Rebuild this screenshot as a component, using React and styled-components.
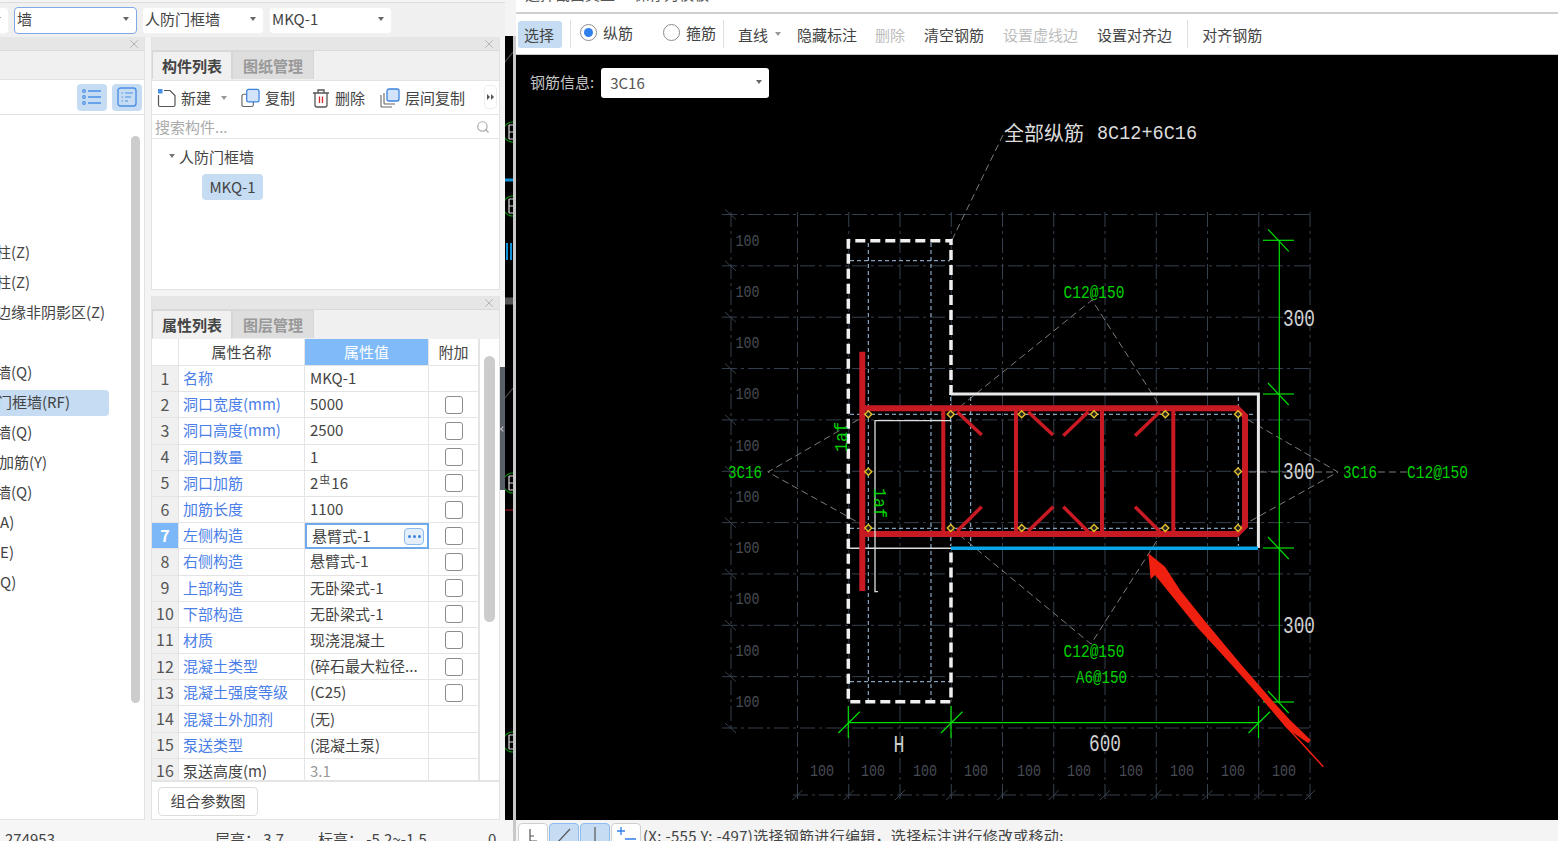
import React from "react";
import styled, { createGlobalStyle } from "styled-components";
import { Search, X } from "lucide-react";

const GlobalStyle = createGlobalStyle`
  html, body {
    margin: 0;
    padding: 0;
    background: #f0f0f0;
    overflow: hidden;
  }
  * {
    box-sizing: border-box;
  }
  body {
    font-family: "Noto Sans CJK SC", "Liberation Sans", sans-serif;
    font-size: 15px;
    color: #444;
  }
`;

const SIDE_ITEMS = [
  { text: "暗柱(Z)", shift: -19 },
  { text: "端柱(Z)", shift: -19 },
  { text: "约束边缘非阴影区(Z)", shift: -34 },
  { text: "", shift: 0 },
  { text: "剪力墙(Q)", shift: -34 },
  { text: "人防门框墙(RF)", shift: -33, active: true },
  { text: "砌体墙(Q)", shift: -34 },
  { text: "砌体加筋(Y)", shift: -31 },
  { text: "保温墙(Q)", shift: -34 },
  { text: "暗梁(A)", shift: -35 },
  { text: "墙垛(E)", shift: -35 },
  { text: "幕墙(Q)", shift: -35 },
];

const ROWS = [
  { name: "名称", value: "MKQ-1" },
  { name: "洞口宽度(mm)", value: "5000", check: true },
  { name: "洞口高度(mm)", value: "2500", check: true },
  { name: "洞口数量", value: "1", check: true },
  { name: "洞口加筋", value: "steel", check: true },
  { name: "加筋长度", value: "1100", check: true },
  { name: "左侧构造", value: "悬臂式-1", check: true, active: true },
  { name: "右侧构造", value: "悬臂式-1", check: true },
  { name: "上部构造", value: "无卧梁式-1", check: true },
  { name: "下部构造", value: "无卧梁式-1", check: true },
  { name: "材质", value: "现浇混凝土", check: true },
  { name: "混凝土类型", value: "(碎石最大粒径...", check: true },
  { name: "混凝土强度等级", value: "(C25)", check: true },
  { name: "混凝土外加剂", value: "(无)" },
  { name: "泵送类型", value: "(混凝土泵)" },
  { name: "泵送高度(m)", value: "3.1", plain: true },
];

const Page = styled.div`
  display: flex;
  width: 1558px;
  height: 841px;
  overflow: hidden;
`;

const LeftArea = styled.div`
  width: 505px;
  height: 841px;
  flex: none;
  display: flex;
  flex-direction: column;
  background: #f4f4f4;
`;

const TopBar = styled.div`
  height: 35px;
  flex: none;
  display: flex;
  align-items: center;
  gap: 5px;
  overflow: hidden;
  background: #f0f0f0;
  border-top: 1px solid #dcdcdc;
  margin-top: 2px;
`;

const Select = styled.div`
  width: ${(p) => p.$width}px;
  margin-left: ${(p) => p.$shift || 0}px;
  height: 27px;
  flex: none;
  display: flex;
  align-items: center;
  justify-content: space-between;
  padding: 0 7px 3px 2px;
  background: #fff;
  border-radius: 4px;
  border: 1px solid ${(p) => (p.$focus ? "#7fa8e6" : "#f2f2f2")};
  white-space: nowrap;
`;

const Caret = styled.i`
  display: block;
  flex: none;
  margin-left: ${(p) => p.$gap || 0}px;
  width: 0;
  height: 0;
  border-left: 3px solid transparent;
  border-right: 3px solid transparent;
  border-top: 4px solid ${(p) => p.$color || "#666"};
`;

const Panels = styled.div`
  display: flex;
  height: 783px;
  flex: none;
`;

const SidePanel = styled.div`
  width: 145px;
  flex: none;
  display: flex;
  flex-direction: column;
  background: #fff;
  border-right: 1px solid #e2e2e2;
  border-bottom: 1px solid #e2e2e2;
`;

const PanelHead = styled.div`
  height: 14px;
  flex: none;
  display: flex;
  align-items: center;
  justify-content: flex-end;
  padding-right: 3px;
  background: #e6e6e6;
  border-bottom: 1px solid #dadada;
  color: #aaa;
`;

const SideTabs = styled.div`
  height: 29px;
  flex: none;
  background: #f0f0f0;
  border-bottom: 1px solid #e2e2e2;
`;

const SideTools = styled.div`
  height: 35px;
  flex: none;
  display: flex;
  align-items: center;
  justify-content: flex-end;
  gap: 5px;
  padding-right: 2px;
  background: #fff;
  border-bottom: 1px solid #e2e2e2;
`;

const ViewButton = styled.div`
  width: 30px;
  height: 27px;
  display: flex;
  align-items: center;
  justify-content: center;
  background: #c5dcf2;
  border-radius: 4px;
`;

const SideBody = styled.div`
  flex: 1;
  display: flex;
  min-height: 0;
`;

const SideList = styled.div`
  width: 109px;
  flex: none;
  padding-top: 125px;
  overflow: hidden;
`;

const SideItem = styled.div`
  height: 26px;
  line-height: 24px;
  margin-bottom: 4px;
  white-space: nowrap;
  overflow: hidden;
  border-radius: 0 4px 4px 0;
  background: ${(p) => (p.$active ? "#c5dcf2" : "transparent")};
`;

const SideLabel = styled.span`
  display: block;
  margin-left: ${(p) => p.$shift}px;
`;

const SideScroll = styled.div`
  width: 9px;
  height: 567px;
  flex: none;
  margin: 21px 0 0 22px;
  background: #cccccc;
  border-radius: 5px;
`;

const Gutter = styled.div`
  width: 6px;
  flex: none;
`;

const MainColumn = styled.div`
  width: 349px;
  flex: none;
  display: flex;
  flex-direction: column;
  gap: 6px;
`;

const SplitColumn = styled.div`
  width: 5px;
  flex: none;
  padding-top: 330px;
`;

const Splitter = styled.div`
  height: 123px;
  display: flex;
  align-items: center;
  justify-content: center;
  background: #5a6068;
`;

const SplitArrow = styled.i`
  display: block;
  width: 4px;
  height: 4px;
  border-left: 1px solid #c8c8c8;
  border-bottom: 1px solid #c8c8c8;
  transform: rotate(45deg);
`;

const Panel = styled.div`
  display: flex;
  flex-direction: column;
  height: ${(p) => p.$height}px;
  flex: none;
  background: #fff;
  border-left: 1px solid #e2e2e2;
  border-right: 1px solid #e2e2e2;
  border-bottom: 1px solid #e2e2e2;
`;

const Tabs = styled.div`
  height: 29px;
  flex: none;
  display: flex;
  padding-bottom: 1px;
  background: #f0f0f0;
`;

const Tab = styled.div`
  width: ${(p) => (p.$active ? 80 : 82)}px;
  display: flex;
  align-items: center;
  justify-content: center;
  padding-bottom: 1px;
  font-weight: 700;
  color: ${(p) => (p.$active ? "#444" : "#999")};
  background: ${(p) => (p.$active ? "#f0f0f0" : "#dedede")};
  border: 1px solid #d6d6d6;
  border-bottom: none;
`;

const Toolbar = styled.div`
  height: 35px;
  flex: none;
  display: flex;
  align-items: center;
  padding-left: 5px;
  position: relative;
  border-top: 1px solid #e4e4e4;
  border-bottom: 1px solid #e4e4e4;
`;

const ToolItem = styled.div`
  display: flex;
  align-items: center;
  gap: 5px;
  margin-right: ${(p) => p.$after || 0}px;
  white-space: nowrap;
`;

const MoreButton = styled.div`
  position: absolute;
  right: 2px;
  top: 4px;
  width: 13px;
  height: 24px;
  display: flex;
  align-items: center;
  justify-content: center;
  gap: 1px;
  background: #fff;
  border: 1px solid #eee;
  border-radius: 4px;
`;

const MoreArrow = styled.i`
  display: block;
  width: 0;
  height: 0;
  border-top: 3px solid transparent;
  border-bottom: 3px solid transparent;
  border-left: 3px solid #555;
`;

const SearchRow = styled.div`
  height: 24px;
  flex: none;
  display: flex;
  align-items: center;
  justify-content: space-between;
  padding: 0 9px 0 3px;
  color: #aaa;
  border-bottom: 1px solid #e4e4e4;
`;

const Tree = styled.div`
  flex: 1;
  padding-top: 4px;
`;

const TreeNode = styled.div`
  height: 26px;
  display: flex;
  align-items: center;
  gap: 4px;
  padding-left: 17px;
`;

const TreeLeaf = styled.div`
  width: 61px;
  height: 26px;
  margin: 5px 0 0 50px;
  padding-bottom: 2px;
  display: flex;
  align-items: center;
  justify-content: center;
  background: #c5dcf2;
  border-radius: 4px;
`;

const TableClip = styled.div`
  height: 443px;
  flex: none;
  display: flex;
  overflow: hidden;
  border-bottom: 2px solid #e4e4e4;
`;

const Table = styled.div`
  width: 328px;
  flex: none;
  border-right: 1px solid #e4e4e4;
`;

const TableRow = styled.div`
  display: grid;
  grid-template-columns: 27px 126px 124px 50px;
  height: ${(p) => (p.$head ? 27 : 26.2)}px;
`;

const Cell = styled.div`
  display: flex;
  align-items: center;
  padding: 0 0 2px 5px;
  white-space: nowrap;
  overflow: hidden;
  background: #fff;
  border-right: 1px solid #e4e4e4;
  border-bottom: 1px solid #e4e4e4;
  color: ${(p) => p.$color || "#444"};
`;

const NameCell = styled(Cell)`
  padding-left: 4px;
  color: ${(p) => (p.$plain ? "#444" : "#4a7ee8")};
`;

const IndexCell = styled(Cell)`
  justify-content: center;
  padding: 0 0 2px;
  font-size: 16px;
  font-weight: ${(p) => (p.$active ? 700 : 400)};
  color: ${(p) => (p.$active ? "#fff" : "#555")};
  background: ${(p) => (p.$active ? "#7cb8f8" : "#f0f0f0")};
`;

const HeadCell = styled(Cell)`
  justify-content: center;
  padding: 0 0 2px;
  color: ${(p) => (p.$active ? "#fff" : "#444")};
  background: ${(p) => (p.$active ? "#80baf8" : "#fff")};
`;

const EditCell = styled(Cell)`
  justify-content: space-between;
  padding: 0 3px 0 5px;
  border: 2px solid #6fa9ea;
`;

const EditValue = styled.span`
  margin-bottom: 2px;
`;

const DotsButton = styled.div`
  width: 20px;
  height: 17px;
  display: flex;
  align-items: center;
  justify-content: center;
  gap: 2px;
  background: #e4effb;
  border: 1px solid #8dbcf0;
  border-radius: 4px;
`;

const Dot = styled.i`
  display: block;
  width: 3px;
  height: 3px;
  background: #3c83e0;
  border-radius: 50%;
`;

const CheckCell = styled(Cell)`
  justify-content: center;
  padding: 0;
`;

const CheckBox = styled.div`
  width: 18px;
  height: 18px;
  background: #fff;
  border: 1px solid #8c8c8c;
  border-radius: 3px;
`;

const SteelMark = styled.span`
  font-size: 11px;
  margin: -5px 1px 0;
  line-height: 1;
`;

const TableSide = styled.div`
  flex: 1;
  display: flex;
  justify-content: center;
  padding-top: 17px;
`;

const TableScroll = styled.div`
  width: 11px;
  height: 266px;
  background: #cccccc;
  border-radius: 6px;
`;

const PanelFoot = styled.div`
  flex: 1;
  padding: 5px 0 0 6px;
`;

const PlainButton = styled.div`
  width: 100px;
  height: 29px;
  padding-bottom: 2px;
  display: flex;
  align-items: center;
  justify-content: center;
  background: #fff;
  border: 1px solid #dcdcdc;
  border-radius: 4px;
`;

const StatusLeft = styled.div`
  flex: 1;
  position: relative;
  display: flex;
  align-items: flex-end;
  overflow: hidden;
  background: #f6f6f6;
  white-space: nowrap;
`;

const StatusText = styled.span`
  flex: none;
  width: ${(p) => p.$width}px;
  height: 20px;
  margin-bottom: -8px;
  line-height: 20px;
`;

const StatusCode = styled(StatusText)`
  padding-left: 5px;
`;

const CadStrip = styled.div`
  width: 11px;
  flex: none;
  display: flex;
  flex-direction: column;
`;

const StripTop = styled.div`
  height: 36px;
  flex: none;
  background: #f4f4f4;
`;

const StripBody = styled.div`
  flex: 1;
  background: #000;
  border-right: 3px solid #c8c8c8;
`;

const StripFoot = styled.div`
  height: 21px;
  flex: none;
  background: #f6f6f6;
  border-right: 3px solid #c8c8c8;
`;

const RightArea = styled.div`
  flex: 1;
  display: flex;
  flex-direction: column;
  background: #fff;
`;

const TitleBar = styled.div`
  height: 14px;
  flex: none;
  display: flex;
  gap: 19px;
  padding-left: 9px;
  overflow: hidden;
  border-bottom: 2px solid #cfcfcf;
  line-height: 20px;
  color: #555;
`;

const TitleText = styled.span`
  display: block;
  margin-top: -16px;
  height: 20px;
`;

const EditBar = styled.div`
  height: 41px;
  flex: none;
  display: flex;
  align-items: center;
  padding-left: 2px;
  background: #fff;
  border-bottom: 1px solid #c8c8c8;
`;

const ModeButton = styled.div`
  width: 44px;
  height: 27px;
  padding-right: 2px;
  display: flex;
  align-items: center;
  justify-content: center;
  background: #c5dcf2;
  border-radius: 3px;
  color: #444;
`;

const Divider = styled.div`
  width: 1px;
  height: 28px;
  flex: none;
  background: #e0e0e0;
  margin: 0 ${(p) => p.$after}px 0 ${(p) => p.$before}px;
`;

const RadioItem = styled.div`
  display: flex;
  align-items: center;
  gap: 6px;
  margin-right: ${(p) => p.$after || 0}px;
  margin-top: -4px;
`;

const Radio = styled.span`
  width: 17px;
  height: 17px;
  display: flex;
  align-items: center;
  justify-content: center;
  background: #fff;
  border: 1px solid #8c8c8c;
  border-radius: 50%;

  &::after {
    content: "";
    display: ${(p) => (p.$on ? "block" : "none")};
    width: 9px;
    height: 9px;
    background: #2f80ed;
    border-radius: 50%;
  }
`;

const EditTool = styled.div`
  display: flex;
  align-items: center;
  white-space: nowrap;
  margin-right: ${(p) => p.$after}px;
  color: ${(p) => (p.$off ? "#bdbdbd" : "#444")};
`;

const Canvas = styled.div`
  position: relative;
  flex: 1;
  background: #000;
  overflow: hidden;
  padding: 13px 0 0 14px;
`;

const CadSvg = styled.svg`
  position: absolute;
  left: 0;
  top: 0;
  width: 1042px;
  height: 765px;
`;

const InfoRow = styled.div`
  position: relative;
  display: flex;
  align-items: center;
  gap: 7px;
  color: #c4c4c4;
`;

const InfoLabel = styled.span`
  margin-bottom: 3px;
`;

const InfoSelect = styled.div`
  width: 168px;
  height: 30px;
  display: flex;
  align-items: center;
  justify-content: space-between;
  padding: 0 7px 2px 9px;
  background: #fff;
  border-radius: 3px;
  color: #555;
`;

const StatusRight = styled.div`
  height: 21px;
  flex: none;
  display: flex;
  align-items: flex-start;
  gap: 1px;
  padding: 3px 0 0 2px;
  overflow: hidden;
  background: #f4f4f4;
`;

const DrawButton = styled.div`
  width: 30px;
  height: 24px;
  flex: none;
  display: flex;
  align-items: flex-start;
  justify-content: center;
  background: ${(p) => (p.$on ? "#c5dcf2" : "#fff")};
  border: 1px solid ${(p) => (p.$on ? "#8dbcf0" : "#cfcfcf")};
  border-radius: 4px;
`;

const StatusHint = styled.span`
  margin-left: 1px;
  white-space: nowrap;
  line-height: 26px;
  letter-spacing: 0.3px;
  color: #444;
`;

const CadLabel = styled.text`
  font-family: "Liberation Mono", monospace;
  text-anchor: middle;
  dominant-baseline: central;
`;

const CadCjk = styled.text`
  font-family: "Noto Sans CJK SC", sans-serif;
  dominant-baseline: central;
`;

const StripDrawing = styled.svg`
  display: block;
  width: 8px;
  height: 784px;
`;

const gridX = Array.from({ length: 11 }, (_, i) => 797.5 + 51.25 * i);
const gridY = Array.from({ length: 11 }, (_, i) => 214.5 + 51.35 * i);
const topRebar = [868.3, 950.7, 1021.7, 1094, 1165.3, 1238];

const GRID = "#36414f";
const GREEN = "#00d000";
const BAR = "#c81a22";
const PALE = "#a6c8e8";
const LEADER = "#7c7c7c";
const DIM = "#474c54";

function Text100({ x, y }) {
  return (
    <CadLabel x={x} y={y + 1} fontSize="16" fill={DIM} textLength="24" lengthAdjust="spacingAndGlyphs">
      100
    </CadLabel>
  );
}

function GreenText({ x, y, w, rotate, children }) {
  return (
    <CadLabel
      x={x}
      y={rotate ? y : y + 0.5}
      fontSize="18"
      fill={GREEN}
      textLength={w}
      lengthAdjust="spacingAndGlyphs"
      transform={rotate ? `rotate(${rotate} ${x} ${y})` : undefined}
    >
      {children}
    </CadLabel>
  );
}

function WhiteText({ x, y, w, children }) {
  return (
    <CadLabel x={x} y={y + 1} fontSize="23" fill="#cfcfcf" textLength={w} lengthAdjust="spacingAndGlyphs">
      {children}
    </CadLabel>
  );
}

function Rebar({ x, y }) {
  return (
    <path
      d={`M${x} ${y - 3.5} L${x + 3.5} ${y} L${x} ${y + 3.5} L${x - 3.5} ${y} Z`}
      fill="#222"
      stroke="#e2c02a"
      strokeWidth="1.4"
    />
  );
}

function DrawingBoard() {
  return (
    <CadSvg viewBox="516 55 1042 765">
      <g stroke={GRID} strokeWidth="1" strokeDasharray="15 4 3 4" fill="none">
        {gridY.map((y) => (
          <line key={y} x1="722" y1={y} x2="1310" y2={y} />
        ))}
        {gridX.map((x) => (
          <line key={x} x1={x} y1="212" x2={x} y2="803" />
        ))}
        <line x1="731" y1="212" x2="731" y2="732" />
        <line x1="793" y1="795" x2="1312" y2="795" />
      </g>
      <g stroke={GRID} strokeWidth="1">
        {gridY.map((y) => (
          <line key={y} x1="725" y1={y - 5} x2="736" y2={y + 5} />
        ))}
        {gridX.map((x) => (
          <line key={x} x1={x - 5} y1="800" x2={x + 5} y2="790" />
        ))}
      </g>
      {[241, 292, 343, 394, 446, 497, 548, 599, 651, 702].map((y) => (
        <Text100 key={y} x={747.5} y={y} />
      ))}
      {[822, 873, 925, 976, 1029, 1079, 1131, 1182, 1233, 1284].map((x) => (
        <Text100 key={x} x={x} y={771} />
      ))}

      <g stroke={PALE} strokeWidth="1" strokeDasharray="4 3" fill="none">
        <line x1="868.3" y1="243" x2="868.3" y2="700" />
        <line x1="931" y1="243" x2="931" y2="700" />
        <line x1="850" y1="260.7" x2="950" y2="260.7" />
        <line x1="850" y1="681.7" x2="950" y2="681.7" />
        <line x1="850" y1="414.3" x2="1256" y2="414.3" />
        <line x1="850" y1="528.3" x2="1256" y2="528.3" />
        <line x1="950.7" y1="397" x2="950.7" y2="546" />
        <line x1="970.7" y1="397" x2="970.7" y2="546" />
        <line x1="1238.3" y1="397" x2="1238.3" y2="546" />
      </g>

      <g stroke={LEADER} strokeWidth="1" strokeDasharray="7 4" fill="none">
        <path d="M952 240 L1003 135" />
        <path d="M868 414 L768 472 L868 528" />
        <path d="M951 414 L1092 300 L1165 414" />
        <path d="M1238 414 L1338 472 L1238 528" />
        <path d="M1238 472 L1338 472" />
        <path d="M1378 472 L1407 472" />
        <path d="M951 528 L1091 644 L1165 528" />
      </g>

      <path
        d="M951 395 V240.7 H848.3 V701.7 H951 V548"
        fill="none"
        stroke="#f0f0f0"
        strokeWidth="3.5"
        strokeDasharray="10 5"
      />
      <path d="M951 395 V394 H1258.4 V548" fill="none" stroke="#e8e8e8" strokeWidth="3" />
      <line x1="848" y1="548.2" x2="951" y2="548.2" stroke="#ddd" strokeWidth="1.4" />
      <line x1="951" y1="548.3" x2="1258" y2="548.3" stroke="#0aa5e8" strokeWidth="3.5" />

      <g fill="none" stroke={BAR}>
        <path d="M862 408.3 H1237 L1245 416 V526 L1237 534 H862" strokeWidth="6" />
        <line x1="862.3" y1="351.7" x2="862.3" y2="591" strokeWidth="6" />
        <g strokeWidth="4">
          <line x1="943.3" y1="408" x2="943.3" y2="534" />
          <line x1="1016" y1="408" x2="1016" y2="534" />
          <line x1="1102" y1="408" x2="1102" y2="534" />
          <line x1="1173.3" y1="408" x2="1173.3" y2="534" />
        </g>
        <g strokeWidth="3.5">
          <line x1="957.3" y1="412" x2="981.7" y2="435" />
          <line x1="1028.3" y1="412" x2="1053" y2="435" />
          <line x1="1088.3" y1="411.7" x2="1063.3" y2="435.7" />
          <line x1="1160" y1="411.7" x2="1135" y2="435.7" />
          <line x1="957.3" y1="531" x2="981.7" y2="506.7" />
          <line x1="1028.3" y1="531" x2="1053.3" y2="506.7" />
          <line x1="1063.3" y1="506.7" x2="1088.3" y2="531.7" />
          <line x1="1135" y1="506.7" x2="1160" y2="531.7" />
        </g>
      </g>

      <path d="M951 420.7 H875 V591.7 H878" fill="none" stroke="#ddd" strokeWidth="1.3" />

      {topRebar.map((x) => (
        <React.Fragment key={x}>
          <Rebar x={x} y={414.3} />
          <Rebar x={x} y={528} />
        </React.Fragment>
      ))}
      <Rebar x={868.3} y={471.7} />
      <Rebar x={1238} y={471.5} />

      <g stroke="#00e000" strokeWidth="1.2" fill="none">
        <line x1="1279.3" y1="240" x2="1279.3" y2="702" />
        {[240.3, 394, 548, 702].map((y) => (
          <React.Fragment key={y}>
            <line x1="1263" y1={y} x2="1294" y2={y} />
            <line x1="1268" y1={y - 11} x2="1288.7" y2={y + 11} />
          </React.Fragment>
        ))}
        <line x1="848" y1="722.7" x2="1258.5" y2="722.7" />
        {[848.3, 951, 1258.5].map((x) => (
          <React.Fragment key={x}>
            <line x1={x} y1="706" x2={x} y2="738" />
            <line x1={x - 10} y1="733" x2={x + 11.5} y2="711.7" />
          </React.Fragment>
        ))}
      </g>

      <GreenText x={842} y={437} w={30} rotate={-90}>1af</GreenText>
      <GreenText x={878.5} y={503} w={30} rotate={90}>1af</GreenText>
      <GreenText x={745} y={472} w={34}>3C16</GreenText>
      <GreenText x={1360} y={472} w={34}>3C16</GreenText>
      <GreenText x={1437.5} y={472} w={61}>C12@150</GreenText>
      <GreenText x={1094} y={292} w={61}>C12@150</GreenText>
      <GreenText x={1094} y={651} w={61}>C12@150</GreenText>
      <GreenText x={1101.5} y={677} w={51}>A6@150</GreenText>

      <WhiteText x={1299} y={319} w={32}>300</WhiteText>
      <WhiteText x={1299} y={472} w={32}>300</WhiteText>
      <WhiteText x={1299} y={626} w={32}>300</WhiteText>
      <WhiteText x={1105} y={744} w={32}>600</WhiteText>
      <WhiteText x={899} y={745} w={11}>H</WhiteText>

      <CadCjk x={1004} y={132} fontSize="20" fill="#dcdcdc">全部纵筋</CadCjk>
      <CadLabel x={1147} y={133} fontSize="20" fill="#dcdcdc" textLength="100" lengthAdjust="spacingAndGlyphs">
        8C12+6C16
      </CadLabel>

      <polygon
        points="1148.3,553.3 1165,566.7 1180,590 1206.7,623.3 1240,663.3 1273.3,701.7 1290,720 1310.7,740 1308.3,743.3 1286.7,728.3 1260,696.7 1233.3,666.7 1196.7,626.7 1155,575 1150.7,579.3"
        fill="#f02010"
      />
      <line x1="1285" y1="725" x2="1323.3" y2="766.7" stroke="#f02010" strokeWidth="1.5" />
    </CadSvg>
  );
}

function StripCad() {
  return (
    <StripDrawing viewBox="505 36 8 784">
      <g fill="none" strokeWidth="1.2">
        <path d="M513 122 A9 9 0 0 0 513 142" stroke="#0a8a0a" />
        <path d="M509 125 H513 M509 132 H513 M509 139 H513 M509 125 V139" stroke="#ddd" />
        <path d="M505 180 H513" stroke="#1090d8" strokeWidth="3" />
        <path d="M513 196 A9 9 0 0 0 513 216" stroke="#0a8a0a" />
        <path d="M509 199 H513 M509 206 H513 M509 213 H513 M509 199 V213" stroke="#ddd" />
        <path d="M507 243 V260 M511 243 V260" stroke="#1090d8" strokeWidth="2" />
        <path d="M505 301 H513" stroke="#555" strokeWidth="7" />
        <path d="M505 510 H513" stroke="#a01018" />
        <path d="M513 473 A9 9 0 0 0 513 493" stroke="#0a8a0a" />
        <path d="M509 476 H513 M509 483 H513 M509 490 H513 M509 476 V490" stroke="#ddd" />
        <path d="M513 732 A9 9 0 0 0 513 752" stroke="#0a8a0a" />
        <path d="M509 735 H513 M509 742 H513 M509 749 H513 M509 735 V749" stroke="#ddd" />
        <path d="M505 62 L513 52 M505 398 L513 388" stroke="#444" />
      </g>
    </StripDrawing>
  );
}

const NewIcon = () => (
  <svg width="19" height="20" viewBox="0 0 19 20">
    <path d="M7 2.5 H13 L18 7.5 V17 A1.5 1.5 0 0 1 16.5 18.5 H3 A1.5 1.5 0 0 1 1.5 17 V7" fill="#fff" stroke="#555" strokeWidth="1.2" />
    <rect x="1" y="1" width="4.5" height="4.5" fill="#4a8fe6" />
  </svg>
);

const CopyIcon = () => (
  <svg width="19" height="20" viewBox="0 0 20 20">
    <rect x="1" y="6" width="12" height="13" rx="2" fill="#fff" stroke="#666" strokeWidth="1.2" />
    <rect x="6" y="1" width="13" height="13" rx="2" fill="#d3e4fa" stroke="#3c83e0" strokeWidth="1.3" />
  </svg>
);

const TrashIcon = () => (
  <svg width="18" height="20" viewBox="0 0 18 20">
    <path d="M1 5 H17 M6 5 V2 H12 V5" fill="none" stroke="#555" strokeWidth="1.3" />
    <path d="M3 5 V17 A2 2 0 0 0 5 19 H13 A2 2 0 0 0 15 17 V5" fill="none" stroke="#555" strokeWidth="1.3" />
    <path d="M7.5 8.5 V15 M10.5 8.5 V15" stroke="#d9272e" strokeWidth="1.3" />
  </svg>
);

const FloorIcon = () => (
  <svg width="20" height="20" viewBox="0 0 20 20">
    <path d="M1 7 V18 A1 1 0 0 0 2 19 H12" fill="none" stroke="#666" strokeWidth="1.1" />
    <path d="M4 5 V15 A1 1 0 0 0 5 16 H15" fill="none" stroke="#666" strokeWidth="1.1" />
    <rect x="7" y="1" width="12" height="12" rx="2" fill="#d3e4fa" stroke="#3c83e0" strokeWidth="1.3" />
  </svg>
);

const ListIcon = () => (
  <svg width="20" height="18" viewBox="0 0 20 18">
    <g fill="none" stroke="#4a8fe6" strokeWidth="1.2">
      <circle cx="2" cy="3" r="1.3" />
      <circle cx="2" cy="9" r="1.3" />
      <circle cx="2" cy="15" r="1.3" />
    </g>
    <path d="M6 3 H19 M6 9 H19 M6 15 H19" stroke="#4a8fe6" strokeWidth="1.4" />
  </svg>
);

const CardIcon = () => (
  <svg width="20" height="20" viewBox="0 0 20 20">
    <rect x="1" y="1" width="18" height="18" rx="2.5" fill="none" stroke="#4a8fe6" strokeWidth="1.4" />
    <path d="M4.5 6 H6 M8 6 H16 M4.5 10 H6 M8 10 H14 M4.5 14 H6 M8 14 H11" stroke="#4a8fe6" strokeWidth="1.2" />
  </svg>
);

const DrawGlyph = ({ kind }) => (
  <svg width="22" height="22" viewBox="0 0 22 22">
    {kind === "corner" && <path d="M8 5 V17 H15 M8 12 H12" fill="none" stroke="#555" strokeWidth="1.2" />}
    {kind === "slash" && <path d="M4 19 L17 5" fill="none" stroke="#555" strokeWidth="1.2" />}
    {kind === "bar" && <path d="M11 3 V20" fill="none" stroke="#555" strokeWidth="1.2" />}
    {kind === "plus" && <path d="M6 3 V11 M2 7 H10 M10 15 H21" fill="none" stroke="#2f80ed" strokeWidth="1.3" />}
  </svg>
);

function SideBar() {
  return (
    <SidePanel>
      <PanelHead>
        <X size={14} strokeWidth={1.4} />
      </PanelHead>
      <SideTabs />
      <SideTools>
        <ViewButton>
          <ListIcon />
        </ViewButton>
        <ViewButton>
          <CardIcon />
        </ViewButton>
      </SideTools>
      <SideBody>
        <SideList>
          {SIDE_ITEMS.map((item, i) => (
            <SideItem key={i} $active={item.active}>
              <SideLabel $shift={item.shift}>{item.text || "\u00a0"}</SideLabel>
            </SideItem>
          ))}
        </SideList>
        <SideScroll />
      </SideBody>
    </SidePanel>
  );
}

function ComponentPanel() {
  return (
    <Panel $height={253}>
      <PanelHead>
        <X size={14} strokeWidth={1.4} />
      </PanelHead>
      <Tabs>
        <Tab $active>构件列表</Tab>
        <Tab>图纸管理</Tab>
      </Tabs>
      <Toolbar>
        <ToolItem $after={14}>
          <NewIcon />
          新建
          <Caret $gap={5} $color="#999" />
        </ToolItem>
        <ToolItem $after={17}>
          <CopyIcon />
          复制
        </ToolItem>
        <ToolItem $after={15}>
          <TrashIcon />
          删除
        </ToolItem>
        <ToolItem>
          <FloorIcon />
          层间复制
        </ToolItem>
        <MoreButton>
          <MoreArrow />
          <MoreArrow />
        </MoreButton>
      </Toolbar>
      <SearchRow>
        搜索构件...
        <Search size={14} color="#aaa" />
      </SearchRow>
      <Tree>
        <TreeNode>
          <Caret $color="#777" />
          人防门框墙
        </TreeNode>
        <TreeLeaf>MKQ-1</TreeLeaf>
      </Tree>
    </Panel>
  );
}

function ValueCell({ row }) {
  if (row.active) {
    return (
      <EditCell>
        <EditValue>{row.value}</EditValue>
        <DotsButton>
          <Dot />
          <Dot />
          <Dot />
        </DotsButton>
      </EditCell>
    );
  }
  if (row.value === "steel") {
    return (
      <Cell>
        2<SteelMark>虫</SteelMark>16
      </Cell>
    );
  }
  return <Cell $color={row.plain ? "#999" : undefined}>{row.value}</Cell>;
}

function PropertyPanel() {
  return (
    <Panel $height={524}>
      <PanelHead>
        <X size={14} strokeWidth={1.4} />
      </PanelHead>
      <Tabs>
        <Tab $active>属性列表</Tab>
        <Tab>图层管理</Tab>
      </Tabs>
      <TableClip>
        <Table>
          <TableRow $head>
            <HeadCell />
            <HeadCell>属性名称</HeadCell>
            <HeadCell $active>属性值</HeadCell>
            <HeadCell>附加</HeadCell>
          </TableRow>
          {ROWS.map((row, i) => (
            <TableRow key={row.name}>
              <IndexCell $active={row.active}>{i + 1}</IndexCell>
              <NameCell $plain={row.plain}>{row.name}</NameCell>
              <ValueCell row={row} />
              <CheckCell>{row.check && <CheckBox />}</CheckCell>
            </TableRow>
          ))}
        </Table>
        <TableSide>
          <TableScroll />
        </TableSide>
      </TableClip>
      <PanelFoot>
        <PlainButton>组合参数图</PlainButton>
      </PanelFoot>
    </Panel>
  );
}

export default function App() {
  return (
    <>
      <GlobalStyle />
      <Page>
        <LeftArea>
          <TopBar>
            <Select $width={100} $shift={-91}>
              <span />
              <Caret />
            </Select>
            <Select $width={123} $focus>
              墙
              <Caret />
            </Select>
            <Select $width={122}>
              人防门框墙
              <Caret />
            </Select>
            <Select $width={123}>
              MKQ-1
              <Caret />
            </Select>
          </TopBar>
          <Panels>
            <SideBar />
            <Gutter />
            <MainColumn>
              <ComponentPanel />
              <PropertyPanel />
            </MainColumn>
            <SplitColumn>
              <Splitter>
                <SplitArrow />
              </Splitter>
            </SplitColumn>
          </Panels>
          <StatusLeft>
            <StatusCode $width={215}>274953</StatusCode>
            <StatusText $width={103}>层高： 3.7</StatusText>
            <StatusText $width={170}>标高： -5.2~-1.5</StatusText>
            <StatusText $width={17}>0</StatusText>
          </StatusLeft>
        </LeftArea>
        <CadStrip>
          <StripTop />
          <StripBody>
            <StripCad />
          </StripBody>
          <StripFoot />
        </CadStrip>
        <RightArea>
          <TitleBar>
            <TitleText>选择截面类型</TitleText>
            <TitleText>保存为模板</TitleText>
          </TitleBar>
          <EditBar>
            <ModeButton>选择</ModeButton>
            <Divider $before={8} $after={9} />
            <RadioItem $after={30}>
              <Radio $on />
              纵筋
            </RadioItem>
            <RadioItem>
              <Radio />
              箍筋
            </RadioItem>
            <Divider $before={7} $after={14} />
            <EditTool $after={16}>
              直线
              <Caret $gap={7} $color="#999" />
            </EditTool>
            <EditTool $after={18}>隐藏标注</EditTool>
            <EditTool $after={19} $off>删除</EditTool>
            <EditTool $after={19}>清空钢筋</EditTool>
            <EditTool $after={19} $off>设置虚线边</EditTool>
            <EditTool $after={15}>设置对齐边</EditTool>
            <Divider $before={0} $after={14} />
            <EditTool $after={0}>对齐钢筋</EditTool>
          </EditBar>
          <Canvas>
            <DrawingBoard />
            <InfoRow>
              <InfoLabel>钢筋信息:</InfoLabel>
              <InfoSelect>
                3C16
                <Caret />
              </InfoSelect>
            </InfoRow>
          </Canvas>
          <StatusRight>
            <DrawButton>
              <DrawGlyph kind="corner" />
            </DrawButton>
            <DrawButton $on>
              <DrawGlyph kind="slash" />
            </DrawButton>
            <DrawButton $on>
              <DrawGlyph kind="bar" />
            </DrawButton>
            <DrawButton>
              <DrawGlyph kind="plus" />
            </DrawButton>
            <StatusHint>(X: -555 Y: -497)选择钢筋进行编辑，选择标注进行修改或移动;</StatusHint>
          </StatusRight>
        </RightArea>
      </Page>
    </>
  );
}
